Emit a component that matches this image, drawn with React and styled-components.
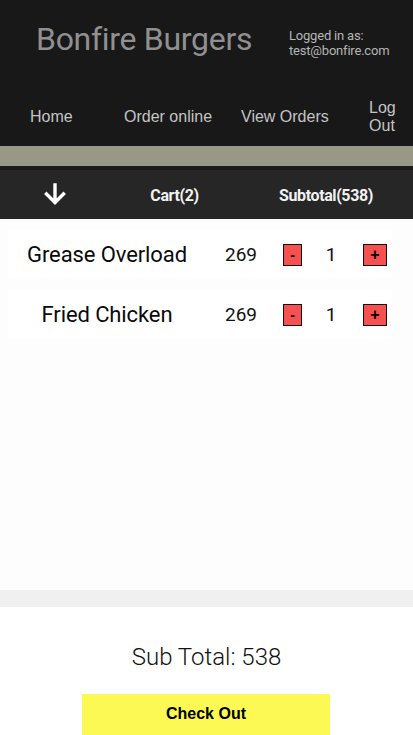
import React from "react";
import styled, { createGlobalStyle } from "styled-components";

const Global = createGlobalStyle`
  html, body { margin: 0; padding: 0; background: #ffffff; }
  body { font-family: Roboto, "Liberation Sans", Arial, sans-serif; }
  * { box-sizing: border-box; }
`;

const Page = styled.div`
  width: 413px;
  min-height: 735px;
  display: flex;
  flex-direction: column;
  background: #ffffff;
`;

const Header = styled.header`
  background: #181818;
  height: 146px;
  display: flex;
  flex-direction: column;
`;

const TitleRow = styled.div`
  display: flex;
  align-items: center;
  height: 80px;
  padding-left: 36px;
  padding-bottom: 2px;
`;

const Title = styled.h1`
  margin: 0;
  font-family: Roboto, sans-serif;
  font-weight: 400;
  font-size: 32px;
  color: #909090;
  letter-spacing: -0.3px;
  width: 253px;
`;

const Logged = styled.div`
  font-family: Roboto, sans-serif;
  font-size: 13px;
  line-height: 15px;
  color: #b5b5b5;
  letter-spacing: -0.2px;
  padding-top: 8px;
`;

const Nav = styled.nav`
  display: flex;
  align-items: center;
  flex: 1;
  padding-left: 30px;
  padding-top: 8px;
`;

const NavItem = styled.a`
  width: ${(p) => p.$w}px;
  text-align: ${(p) => (p.$center ? "center" : "left")};
  font-family: "Liberation Sans", Arial, sans-serif;
  font-size: 16px;
  line-height: 18px;
  color: #c4c4c4;
  text-decoration: none;
`;

const Band = styled.div`
  height: 20px;
  background: #999786;
`;

const Bar = styled.div`
  border-top: 4px solid #1a1a1a;
  background: #262626;
  height: 53px;
  display: grid;
  grid-template-columns: 110px 129px 1fr;
  align-items: center;
  justify-items: center;
`;

const BarText = styled.span`
  font-family: Roboto, sans-serif;
  font-weight: 700;
  font-size: 16px;
  color: #f2f2f2;
  letter-spacing: -0.4px;
  padding-top: 2px;
`;

const Arrow = styled.svg`
  display: block;
  margin-bottom: 2px;
`;

const Cart = styled.section`
  background: #fdfdfd;
  height: 371px;
  padding: 10px 21px 0 8px;
  display: flex;
  flex-direction: column;
  gap: 10px;
`;

const Row = styled.div`
  background: #ffffff;
  height: 50px;
  display: grid;
  grid-template-columns: 198px 70px 33px 44px 1fr;
  align-items: center;
  padding-top: 1px;
`;

const Name = styled.span`
  text-align: center;
  font-size: 22px;
  color: #0a0a0a;
  letter-spacing: -0.1px;
`;

const Num = styled.span`
  text-align: center;
  font-size: 19px;
  color: #111;
`;

const QtyBtn = styled.button`
  justify-self: ${(p) => (p.$offset ? "start" : "center")};
  margin: 0 0 0 ${(p) => p.$offset || 0}px;
  width: ${(p) => p.$w}px;
  height: 22px;
  padding: 0;
  border: 1.5px solid #111;
  background: #f75050;
  color: #000;
  font-family: "Liberation Sans", Arial, sans-serif;
  font-weight: 700;
  font-size: ${(p) => p.$fs}px;
  line-height: 18px;
`;

const Divider = styled.div`
  height: 17px;
  background: #f0f0f0;
`;

const Footer = styled.section`
  background: #ffffff;
  display: flex;
  flex-direction: column;
  align-items: center;
  padding-top: 36px;
`;

const SubTotal = styled.div`
  font-family: Roboto, sans-serif;
  font-weight: 300;
  font-size: 24px;
  color: #111;
  margin-bottom: 23px;
`;

const Checkout = styled.button`
  width: 248px;
  height: 42px;
  border: none;
  background: #fcf955;
  font-family: "Liberation Sans", Arial, sans-serif;
  font-weight: 700;
  font-size: 16px;
  color: #000;
  padding-bottom: 3px;
  margin-right: 1px;
`;

const items = [
  { name: "Grease Overload", price: 269, qty: 1 },
  { name: "Fried Chicken", price: 269, qty: 1 },
];

export default function App() {
  return (
    <Page>
      <Global />
      <Header>
        <TitleRow>
          <Title>Bonfire Burgers</Title>
          <Logged>
            Logged in as:
            <br />
            test@bonfire.com
          </Logged>
        </TitleRow>
        <Nav>
          <NavItem $w={94}>Home</NavItem>
          <NavItem $w={117}>Order online</NavItem>
          <NavItem $w={128}>View Orders</NavItem>
          <NavItem $w={26} $center>
            Log
            <br />
            Out
          </NavItem>
        </Nav>
      </Header>
      <Band />
      <Bar>
        <Arrow width="22" height="22" viewBox="0 0 22 22">
          <path
            d="M11 2 V19 M2.5 11 L11 19.5 L19.5 11"
            fill="none"
            stroke="#ffffff"
            strokeWidth="3.4"
            strokeLinecap="square"
          />
        </Arrow>
        <BarText>Cart(2)</BarText>
        <BarText>Subtotal(538)</BarText>
      </Bar>
      <Cart>
        {items.map((it) => (
          <Row key={it.name}>
            <Name>{it.name}</Name>
            <Num>{it.price}</Num>
            <QtyBtn $w={19} $fs={14}>-</QtyBtn>
            <Num>{it.qty}</Num>
            <QtyBtn $w={24} $fs={16} $offset={10}>+</QtyBtn>
          </Row>
        ))}
      </Cart>
      <Divider />
      <Footer>
        <SubTotal>Sub Total: 538</SubTotal>
        <Checkout>Check Out</Checkout>
      </Footer>
    </Page>
  );
}
